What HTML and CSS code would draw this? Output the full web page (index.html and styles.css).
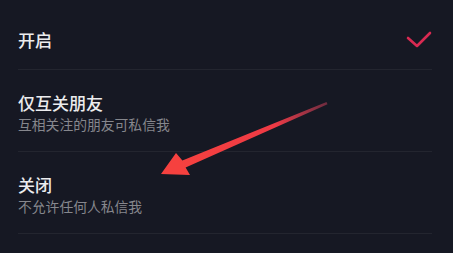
FILE: index.html
```html
<!DOCTYPE html>
<html lang="zh-CN">
<head>
<meta charset="utf-8">
<title>私信设置</title>
<link rel="stylesheet" href="styles.css">
</head>
<body>
<div class="page">
  <ul class="list">
    <li class="item first">
      <div class="text">
        <div class="title">开启</div>
      </div>
      <svg class="check" width="26" height="18" viewBox="0 0 26 18" aria-hidden="true">
        <polyline points="2,7 11,15 24,2" fill="none" stroke="#d92a52" stroke-width="2.6" stroke-linecap="round" stroke-linejoin="round"/>
      </svg>
    </li>
    <li class="item">
      <div class="text">
        <div class="title">仅互关朋友</div>
        <div class="sub">互相关注的朋友可私信我</div>
      </div>
    </li>
    <li class="item">
      <div class="text">
        <div class="title">关闭</div>
        <div class="sub">不允许任何人私信我</div>
      </div>
    </li>
  </ul>
  <svg class="arrow" width="453" height="253" viewBox="0 0 453 253" aria-hidden="true">
    <defs>
      <linearGradient id="ag" x1="327" y1="103" x2="180" y2="166" gradientUnits="userSpaceOnUse">
        <stop offset="0" stop-color="#c8405a" stop-opacity="0.5"/>
        <stop offset="0.35" stop-color="#ee3a45"/>
        <stop offset="1" stop-color="#f6413f"/>
      </linearGradient>
    </defs>
    <polygon points="326.5,102 327.5,104.2 185.6,167.4 190,175 161,174 176,153 182.4,160.6" fill="url(#ag)"/>
  </svg>
</div>
</body>
</html>
```

FILE: styles.css
```css
html, body {
  margin: 0;
  padding: 0;
  background: #161823;
}

body {
  font-family: "Noto Sans CJK SC", "Noto Sans", sans-serif;
  color: #ececee;
}

.page {
  position: relative;
  width: 453px;
  height: 253px;
  overflow: hidden;
}

.list {
  list-style: none;
  margin: 0;
  padding: 0 21px 0 18px;
}

.item {
  display: flex;
  align-items: center;
  justify-content: space-between;
  padding: 22px 0 18px;
  border-bottom: 1px solid #23252f;
}

.item.first {
  padding: 29px 0 18px;
}

.title {
  font-size: 17px;
  line-height: 22px;
  font-weight: 500;
  color: #ececee;
}

.sub {
  margin-top: 1px;
  font-size: 13.8px;
  line-height: 18px;
  color: #86878d;
}

.check {
  display: block;
}

.arrow {
  position: absolute;
  left: 0;
  top: 0;
  pointer-events: none;
}
```
